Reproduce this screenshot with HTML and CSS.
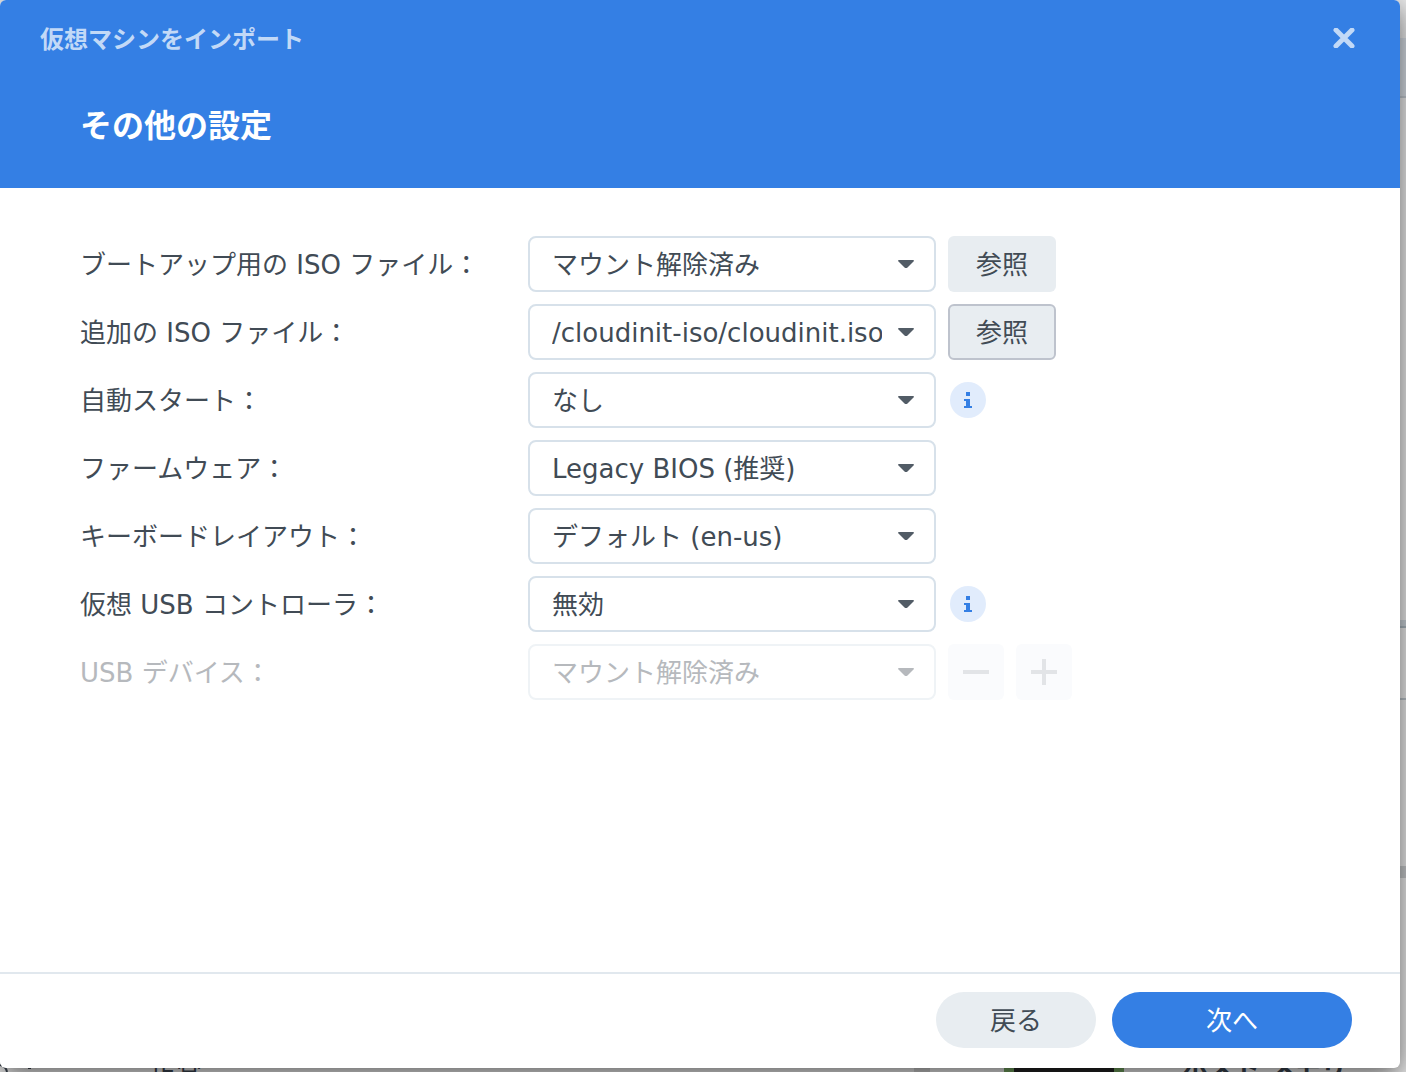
FILE: index.html
```html
<!DOCTYPE html>
<html lang="ja">
<head>
<meta charset="utf-8">
<meta name="viewport" content="width=device-width, initial-scale=1">
<title>仮想マシンをインポート</title>
<link rel="stylesheet" href="styles.css">
</head>
<body>
<svg class="sprite" aria-hidden="true">
  <symbol id="caret" viewBox="0 0 16 8"><path d="M0 1Q0 0 1 0H15Q16 0 16 1L9.500 7.500Q8 8.500 6.500 7.500Z" fill="currentColor"/></symbol>
  <symbol id="info" viewBox="0 0 8 16"><path d="M2 0H6V4H2ZM0 7H6V14H8V16H0V14H2V9H0Z" fill="currentColor"/></symbol>
</svg>
<div class="desktop">
  <div class="backdrop" aria-hidden="true">
    <span class="rule rule-toolbar"></span>
    <span class="rule rule-row"></span>
    <span class="rule rule-line"></span>
    <span class="rule rule-panel"></span>
    <svg class="gauge" width="32" height="8"><path d="M0 1Q6 2 7 8M28 4H31" fill="none" stroke="currentColor" stroke-width="2"/></svg>
    <span class="status">正常</span>
    <span class="divider"></span>
    <span class="host"></span>
    <span class="memory">ホスト メモリ</span>
  </div>
  <main class="dialog">
    <header class="dialog-header">
      <div class="title-bar">
        <p class="dialog-title">仮想マシンをインポート</p>
        <button class="close" type="button" aria-label="閉じる">
          <svg width="22" height="20" viewBox="0 0 22 20"><path d="M3 2L19 18M19 2L3 18" stroke="currentColor" stroke-width="5" stroke-linecap="round"/></svg>
        </button>
      </div>
      <h1 class="step-title">その他の設定</h1>
    </header>
    <form class="form">
      <div class="row">
        <label for="boot">ブートアップ用の ISO ファイル：</label>
        <div class="select"><select id="boot"><option>マウント解除済み</option></select><svg class="caret"><use href="#caret"/></svg></div>
        <button class="button" type="button">参照</button>
      </div>
      <div class="row">
        <label for="extra">追加の ISO ファイル：</label>
        <div class="select"><select id="extra"><option>/cloudinit-iso/cloudinit.iso</option></select><svg class="caret"><use href="#caret"/></svg></div>
        <button class="button button-focused" type="button">参照</button>
      </div>
      <div class="row">
        <label for="autostart">自動スタート：</label>
        <div class="select"><select id="autostart"><option>なし</option></select><svg class="caret"><use href="#caret"/></svg></div>
        <button class="info" type="button" aria-label="情報"><svg width="8" height="16"><use href="#info"/></svg></button>
      </div>
      <div class="row">
        <label for="firmware">ファームウェア：</label>
        <div class="select"><select id="firmware"><option>Legacy BIOS (推奨)</option></select><svg class="caret"><use href="#caret"/></svg></div>
      </div>
      <div class="row">
        <label for="keyboard">キーボードレイアウト：</label>
        <div class="select"><select id="keyboard"><option>デフォルト (en-us)</option></select><svg class="caret"><use href="#caret"/></svg></div>
      </div>
      <div class="row">
        <label for="controller">仮想 USB コントローラ：</label>
        <div class="select"><select id="controller"><option>無効</option></select><svg class="caret"><use href="#caret"/></svg></div>
        <button class="info" type="button" aria-label="情報"><svg width="8" height="16"><use href="#info"/></svg></button>
      </div>
      <div class="row row-disabled">
        <label for="device">USB デバイス：</label>
        <div class="select"><select id="device" disabled><option>マウント解除済み</option></select><svg class="caret"><use href="#caret"/></svg></div>
        <button class="square" type="button" aria-label="削除" disabled><svg width="26" height="26"><path d="M0 13H26" stroke="currentColor" stroke-width="4"/></svg></button>
        <button class="square" type="button" aria-label="追加" disabled><svg width="26" height="26"><path d="M0 13H26M13 0V26" stroke="currentColor" stroke-width="4"/></svg></button>
      </div>
    </form>
    <footer class="dialog-footer">
      <button class="pill" type="button">戻る</button>
      <button class="pill pill-primary" type="button">次へ</button>
    </footer>
  </main>
</div>
</body>
</html>
```
FILE: styles.css
```css
* { box-sizing: border-box; }

body {
  margin: 0;
  color: #414b55;
  font: 26px/32px "DejaVu Sans", "Noto Sans CJK JP", sans-serif;
}

button, select {
  margin: 0;
  border: 0;
  color: inherit;
  font: inherit;
}

button { padding: 0; }
svg { display: block; }
.sprite { position: absolute; width: 0; height: 0; }

.desktop {
  position: relative;
  display: flex;
  min-height: 100vh;
  padding: 0 6px 4px 0;
  overflow: hidden;
  background: #fff;
}

/* Manager window seen behind the dialog */
.backdrop { position: absolute; inset: 0; background: #eaeaea; color: #39424e; }
.backdrop > * { position: absolute; }
.rule { right: 0; width: 12px; }
.rule-toolbar { top: 38px; height: 60px; background: #d5dbe2; border-bottom: 2px solid #c0c7ce; }
.rule-row { top: 620px; height: 8px; background: #c8d0d6; border-bottom: 2px solid #aab6be; }
.rule-line { top: 698px; height: 2px; background: #b8c0c6; }
.rule-panel { top: 866px; height: 12px; background: #c6c8ca; }
.gauge { left: 0; bottom: 0; }
.status { left: 150px; bottom: -16px; }
.divider { left: 914px; bottom: 0; width: 16px; height: 12px; background: #ccc; }
.host { left: 1004px; bottom: 0; width: 120px; height: 12px; background: #222; border: solid #6f9f5c; border-width: 0 10px; }
.memory { left: 1182px; bottom: -12px; font-weight: 700; }

.dialog {
  position: relative;
  display: flex;
  flex: 1;
  flex-direction: column;
  min-width: 0;
  border-radius: 6px;
  background: #fff;
  box-shadow: 0 8px 28px rgba(0, 0, 0, .6);
}

.dialog-header {
  padding: 16px 40px 38px;
  border-radius: 6px 6px 0 0;
  background: #347fe4;
  color: #fff;
}

.title-bar {
  display: flex;
  align-items: center;
  justify-content: space-between;
  height: 44px;
}

.dialog-title { margin: 0; padding-top: 4px; color: #c2d9f7; font-size: 24px; font-weight: 700; }
.close { display: grid; place-items: center; width: 32px; height: 32px; background: none; color: #c2d9f7; }
.step-title { margin: 42px 40px 0; font-size: 32px; line-height: 48px; font-weight: 700; }

.form {
  display: flex;
  flex: 1;
  flex-direction: column;
  gap: 12px;
  padding: 48px 80px;
}

.row { display: flex; align-items: center; gap: 12px; }
.row label { width: 436px; padding-top: 2px; }
.select { display: grid; align-items: center; width: 408px; }
.select > * { grid-area: 1 / 1; }

.select select {
  width: 100%;
  height: 56px;
  padding: 2px 52px 0 22px;
  border: 2px solid #d7e1ea;
  border-radius: 8px;
  background: #fff;
  text-overflow: clip;
  appearance: none;
}

.caret { justify-self: end; width: 16px; height: 8px; margin-right: 22px; color: #525c66; pointer-events: none; }

.button { width: 108px; height: 56px; padding-top: 2px; border-radius: 6px; background: #e8edf1; }
.button-focused { border: 2px solid #bec3cd; }

.info {
  display: grid;
  place-items: center;
  width: 36px;
  height: 36px;
  margin-left: 2px;
  border-radius: 50%;
  background: #e1ecfc;
  color: #347fe4;
}

.row-disabled label, .row-disabled select, .row-disabled .caret { opacity: 1; color: #b6b9bd; }
.row-disabled select { border-color: #eff3f6; }
.square { display: grid; place-items: center; width: 56px; height: 56px; border-radius: 6px; background: #fafbfd; color: #e2e4e7; }

.dialog-footer {
  display: flex;
  justify-content: flex-end;
  gap: 16px;
  padding: 18px 48px 20px;
  border-top: 2px solid #e1e8ee;
}

.pill { width: 160px; height: 56px; padding-top: 2px; border-radius: 28px; background: #e8edf1; }
.pill-primary { width: 240px; background: #347fe4; color: #fff; }
```
